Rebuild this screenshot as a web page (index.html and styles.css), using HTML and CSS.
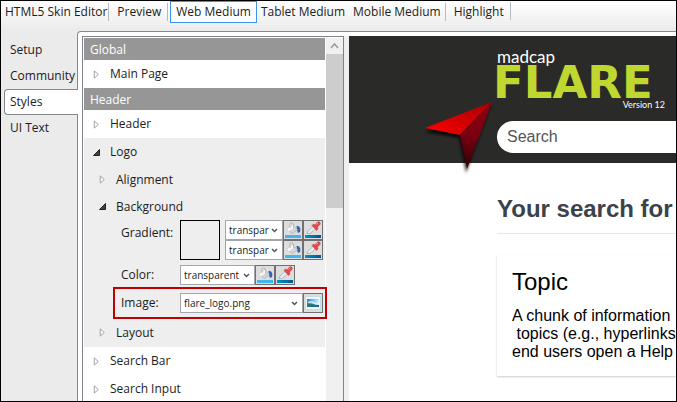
FILE: index.html
```html
<!DOCTYPE html>
<html lang="en">
<head>
<meta charset="utf-8">
<title>HTML5 Skin Editor</title>
<link rel="stylesheet" href="styles.css">
</head>
<body>
<svg width="0" height="0" class="defs" aria-hidden="true">
  <defs>
    <linearGradient id="g-deep" x1="0" x2="1"><stop offset="0" stop-color="#0091cf"/><stop offset="1" stop-color="#00568c"/></linearGradient>
    <linearGradient id="g-sky" x1="0" x2="1" y2="0.3"><stop offset="0" stop-color="#1b86cf"/><stop offset="1" stop-color="#d4eef8"/></linearGradient>
    <linearGradient id="g-land" x1="0" x2="1"><stop offset="0" stop-color="#2d7f6c"/><stop offset="1" stop-color="#1a5f9a"/></linearGradient>
    <symbol id="closed" viewBox="0 0 6 10"><path d="M.5 1v8L5 5z" fill="#fff" stroke="#999"/></symbol>
    <symbol id="open" viewBox="0 0 7 7"><path d="M6.5.5v6h-6z" fill="#444" stroke="#222"/></symbol>
    <symbol id="bucket" viewBox="0 0 18 18">
      <path d="M12.500 5c3-.5 4.500 2 3.500 6l-2 1-1-3z" fill="#2f63b5"/>
      <path d="M3 8.500 8.500 4l5 4.500L8.500 12.500z" fill="#d3d5d7" stroke="#b0b3b6" stroke-width=".8"/>
      <path d="M8.500 4 10.500 6 5 10.500 3 8.500z" fill="#f8f8f8"/>
      <path d="M6.500 6.500C4.500 3 6 1.500 8 2s2 3 1.500 5" fill="none" stroke="#b2b5b8"/>
      <path d="M1 14h16v3H1z" fill="#3fb5f2"/>
    </symbol>
    <symbol id="dropper" viewBox="0 0 18 18">
      <path d="m3 12.500 1-2.500 5.500-5 2.500 2.500-6 5z" fill="#e6ecef" stroke="#a3adb4" stroke-width=".8"/>
      <path d="M8 4.500 9.500 3l1.500 1 2.500-3c1.500-1 3.500.5 2.500 2.500L13.500 6l.5 2-1.500 1.500z" fill="#e1474b" stroke="#d0454a" stroke-width=".6"/>
      <path d="m12.500 3.500 1.500-1.500" stroke="#f6a2a2"/>
      <path d="M1 14h16v3H1z" fill="url(#g-deep)"/>
    </symbol>
    <symbol id="picture" viewBox="0 0 18 18">
      <path d="M1.500 2.500h15v13h-15z" fill="#eef8fc" stroke="#c3dce8"/>
      <path d="M3 5h12v8H3z" fill="url(#g-sky)"/>
      <path d="M3 9.500c4-.5 8 1.500 12 1.500v2H3z" fill="url(#g-land)"/>
      <path d="M4 8.500c3-1 5-.5 6 .5s3 1 5 1" fill="none" stroke="#e2f3f8" stroke-width="1.200"/>
    </symbol>
  </defs>
</svg>
<div class="app">
  <nav class="toolbar">
    <span class="title">HTML5 Skin Editor</span>
    <button class="tool sep">Preview</button>
    <button class="tool sep active">Web Medium</button>
    <button class="tool tight">Tablet Medium</button>
    <button class="tool tight">Mobile Medium</button>
    <button class="tool sep">Highlight</button>
    <span class="sep end"></span>
  </nav>
  <div class="workspace">
    <nav class="tabs">
      <button class="tab">Setup</button>
      <button class="tab">Community</button>
      <button class="tab selected">Styles</button>
      <button class="tab">UI Text</button>
    </nav>
    <main class="page">
      <section class="props">
        <div class="tree">
          <h2 class="group">Global</h2>
          <div class="row"><svg class="mark"><use href="#closed"/></svg>Main Page</div>
          <h2 class="group">Header</h2>
          <div class="row"><svg class="mark"><use href="#closed"/></svg>Header</div>
          <div class="expanded">
            <div class="row"><svg class="mark"><use href="#open"/></svg>Logo</div>
            <div class="row sub"><svg class="mark"><use href="#closed"/></svg>Alignment</div>
            <div class="row sub"><svg class="mark"><use href="#open"/></svg>Background</div>
            <div class="field">
              <label for="grad1">Gradient:</label>
              <span class="swatch"></span>
              <div class="stack">
                <div class="combo"><select id="grad1"><option>transpar</option></select><button class="pick" aria-label="Fill"><svg><use href="#bucket"/></svg></button><button class="pick" aria-label="Pick color"><svg><use href="#dropper"/></svg></button></div>
                <div class="combo"><select aria-label="Gradient end"><option>transpar</option></select><button class="pick" aria-label="Fill"><svg><use href="#bucket"/></svg></button><button class="pick" aria-label="Pick color"><svg><use href="#dropper"/></svg></button></div>
              </div>
            </div>
            <div class="field color">
              <label for="color">Color:</label>
              <div class="combo"><select id="color"><option>transparent</option></select><button class="pick" aria-label="Fill"><svg><use href="#bucket"/></svg></button><button class="pick" aria-label="Pick color"><svg><use href="#dropper"/></svg></button></div>
            </div>
            <div class="field image">
              <label for="image">Image:</label>
              <div class="combo"><select id="image"><option>flare_logo.png</option></select><button class="pick" aria-label="Browse"><svg><use href="#picture"/></svg></button></div>
            </div>
            <div class="row sub"><svg class="mark"><use href="#closed"/></svg>Layout</div>
          </div>
          <div class="row"><svg class="mark"><use href="#closed"/></svg>Search Bar</div>
          <div class="row"><svg class="mark"><use href="#closed"/></svg>Search Input</div>
        </div>
        <div class="scroll">
          <svg class="up" viewBox="0 0 17 16"><path d="m5 10 3.500-4 3.500 4" fill="none" stroke="#999" stroke-width="1.500"/></svg>
          <div class="thumb"></div>
        </div>
      </section>
      <section class="preview">
        <header class="banner">
          <div class="logo">
            <span class="brand">madcap</span>
            <span class="name">FLARE</span>
            <span class="version">Version 12</span>
          </div>
          <input class="search" type="text" placeholder="Search" aria-label="Search">
          <svg class="pointer" viewBox="0 0 80 80" aria-hidden="true">
            <defs>
              <linearGradient id="p-top" x1="0" y1="0.5" x2="1" y2="0"><stop offset="0" stop-color="#f00000"/><stop offset="1" stop-color="#a80006"/></linearGradient>
              <linearGradient id="p-side" x1="0.5" y1="0" x2="0.4" y2="1"><stop offset="0" stop-color="#8e0010"/><stop offset=".5" stop-color="#7c0010"/><stop offset="1" stop-color="#300006"/></linearGradient>
              <filter id="p-shadow"><feGaussianBlur stdDeviation="1.500"/></filter>
            </defs>
            <path d="M71 8 5 35l34 6 7 35z" fill="#000" opacity=".75" filter="url(#p-shadow)"/>
            <path d="M72 5 5 31l35 7z" fill="url(#p-top)"/>
            <path d="M72 5 40 38l7 34z" fill="url(#p-side)"/>
          </svg>
        </header>
        <div class="results">
          <h1>Your search for</h1>
          <article class="card">
            <h3>Topic</h3>
            <p>A chunk of information<br>&nbsp;topics (e.g., hyperlinks<br>end users open a Help</p>
          </article>
        </div>
      </section>
    </main>
  </div>
</div>
</body>
</html>
```
FILE: styles.css
```css
* { box-sizing: border-box; }
body {
  margin: 0;
  font: 12px/16px "Open Sans", "Noto Sans", sans-serif;
  color: #1c1c1c;
}
button, select, input { font: inherit; color: inherit; margin: 0; }
h1, h2, h3, p { margin: 0; }
.defs { position: absolute; }
.app {
  display: flex;
  flex-direction: column;
  height: 100vh;
  overflow: hidden;
  border: 1px solid #000;
  background: #ebebeb;
}
.toolbar {
  display: flex;
  flex: none;
  height: 30px;
  align-items: flex-start;
  background: linear-gradient(#fff, #ebebeb);
  white-space: nowrap;
}
.title { padding: 3px 1px 3px 4px; }
.tool {
  height: 22px;
  padding: 0 5px;
  border: 1px solid transparent;
  background: none;
}
.tool.active { border-color: #3c96f0; background: #fff; }
.tool.tight { padding: 0 3px; }
.sep { position: relative; margin-left: 3px; }
.sep::before {
  content: "";
  position: absolute;
  left: -3px;
  top: 1px;
  width: 1px;
  height: 18px;
  background: #b4b9c4;
}
.tool.sep::before { left: -4px; }
.sep.end { height: 22px; }
.workspace { display: flex; flex: 1; min-height: 0; }
.tabs {
  display: flex;
  flex: none;
  flex-direction: column;
  width: 76px;
  padding: 6px 0 0 3px;
}
.tab {
  height: 26px;
  padding: 0 5px;
  border: 1px solid transparent;
  background: none;
  text-align: left;
}
.tab.selected {
  position: relative;
  margin-right: -1px;
  border-color: #85878c;
  border-right: 0;
  border-radius: 4px 0 0 4px;
  background: #fff;
}
.page {
  display: flex;
  flex: 1;
  min-width: 0;
  padding: 4px 0 0 4px;
  border: solid #85878c;
  border-width: 1px 0 0 1px;
  border-radius: 4px 0 0 0;
  background: #fff;
}
.props {
  display: flex;
  flex: none;
  width: 262px;
  padding: 1px 0 0 1px;
  border: solid #7d828c;
  border-width: 1px 1px 0;
  background: #fff;
}
.tree { flex: 1; }
.group {
  height: 22px;
  padding-left: 6px;
  font-size: 12px;
  line-height: 24px;
  font-weight: 400;
  color: #fff;
  background: #969696;
}
.row {
  display: flex;
  align-items: center;
  height: 28px;
  padding-left: 9px;
}
.row.sub { height: 27px; padding-left: 15px; }
.mark { flex: none; width: 7px; height: 9px; margin-right: 10px; }
.expanded { padding-bottom: 1px; background: #eee; }
.field { display: flex; padding-left: 37px; }
.field label { width: 59px; padding-top: 5px; }
.swatch { width: 40px; height: 40px; margin-right: 5px; border: 1px solid #000; }
.combo { display: flex; height: 20px; }
select {
  appearance: none;
  width: 58px;
  height: 20px;
  padding: 0 12px 0 3px;
  border: 1px solid #a5a5ad;
  border-radius: 0;
  font-size: 10px;
  background: #fff url("data:image/svg+xml,%3Csvg xmlns='http://www.w3.org/2000/svg' width='7' height='5'%3E%3Cpath d='M1 1l2.500 2.500L6 1' fill='none' stroke='%23555' stroke-width='1.500'/%3E%3C/svg%3E") no-repeat right 4px center;
}
.pick {
  width: 20px;
  height: 20px;
  padding: 0;
  border: 1px solid #707070;
  background: #ddd;
}
.pick svg { display: block; width: 18px; height: 18px; }
.color { padding: 5px 0 2px 37px; }
.color label { padding-top: 2px; }
.color select { width: 75px; }
.image {
  position: relative;
  margin: 0 -2px 0 29px;
  padding: 4px 0 4px 6px;
  border: 2px solid #c00000;
}
.image label { padding-top: 2px; }
.image select { width: 123px; }
.scroll { width: 17px; margin-left: 1px; background: #f0f0f0; }
.up { display: block; width: 17px; height: 16px; }
.thumb { height: 154px; background: #cdcdcd; }
.preview {
  flex: 1;
  min-width: 0;
  margin-left: 5px;
  box-shadow: -5px 0 #efefef;
  background: #fff;
  font-family: "Liberation Sans", Arial, sans-serif;
  white-space: nowrap;
}
.banner {
  position: relative;
  height: 127px;
  padding: 12px 0 0 148px;
  background: #2a2a28;
}
.logo {
  display: flex;
  flex-direction: column;
  width: 168px;
  height: 73px;
  font-family: Lato, sans-serif;
  color: #fff;
}
.brand { font-size: 17px; line-height: 18px; }
.name {
  margin-left: -4px;
  font: 700 45px/34px "DejaVu Sans", sans-serif;
  color: #bfd730;
}
.version { align-self: flex-end; font-size: 9px; line-height: 10px; }
.search {
  display: block;
  width: 100%;
  height: 32px;
  padding: 0 10px;
  border: 0;
  border-radius: 16px 0 0 16px;
  font-size: 16px;
  background: #fff;
}
.search::placeholder { color: #555; opacity: 1; }
.pointer { position: absolute; left: 71px; top: 61px; width: 80px; height: 80px; }
.results { padding: 32px 0 0 148px; }
h1 {
  height: 39px;
  border-bottom: 1px solid #e8e8e8;
  font-size: 24px;
  line-height: 28px;
  color: #3b4249;
}
.card {
  margin-top: 21px;
  padding: 12px 15px 15px;
  box-shadow: 0 1px 2px #ccc;
  color: #000;
}
h3 { margin-bottom: 10px; font-size: 24px; font-weight: 400; line-height: 30px; }
p { font-size: 16px; line-height: 18px; }
```
